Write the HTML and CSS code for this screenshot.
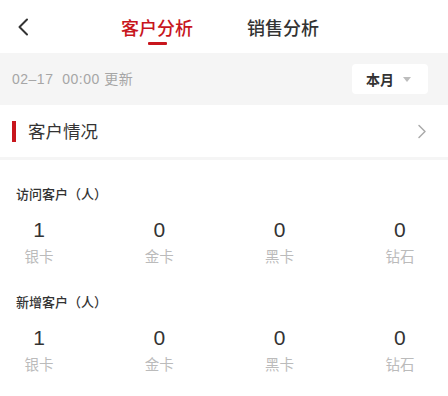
FILE: index.html
```html
<!DOCTYPE html>
<html lang="zh-CN">
<head>
<meta charset="utf-8">
<link rel="stylesheet" href="styles.css">
</head>
<body>
<div class="header">
  <svg class="back" width="12" height="18" viewBox="0 0 12 18"><path d="M10 1.5 L2.5 9 L10 16.5" fill="none" stroke="#333" stroke-width="2" stroke-linecap="round" stroke-linejoin="round"/></svg>
  <div class="tabs">
    <div class="tab active"><span>客户分析</span><i class="line"></i></div>
    <div class="tab"><span>销售分析</span></div>
  </div>
</div>
<div class="bar">
  <div class="date">02–17&nbsp;&nbsp;00:00 更新</div>
  <div class="picker"><span>本月</span><i class="tri"></i></div>
</div>
<div class="card-row">
  <i class="mark"></i>
  <div class="card-title">客户情况</div>
  <svg class="more" width="10" height="15" viewBox="0 0 10 15"><path d="M2 1.5 L8 7.5 L2 13.5" fill="none" stroke="#aaa" stroke-width="1.5" stroke-linecap="round" stroke-linejoin="round"/></svg>
</div>
<div class="divider"></div>
<div class="stats">
  <div class="group">
    <div class="g-title">访问客户（人）</div>
    <div class="cols">
      <div class="col"><div class="num">1</div><div class="lbl">银卡</div></div>
      <div class="col"><div class="num">0</div><div class="lbl">金卡</div></div>
      <div class="col"><div class="num">0</div><div class="lbl">黑卡</div></div>
      <div class="col"><div class="num">0</div><div class="lbl">钻石</div></div>
    </div>
  </div>
  <div class="group">
    <div class="g-title">新增客户（人）</div>
    <div class="cols">
      <div class="col"><div class="num">1</div><div class="lbl">银卡</div></div>
      <div class="col"><div class="num">0</div><div class="lbl">金卡</div></div>
      <div class="col"><div class="num">0</div><div class="lbl">黑卡</div></div>
      <div class="col"><div class="num">0</div><div class="lbl">钻石</div></div>
    </div>
  </div>
</div>
</body>
</html>
```
FILE: styles.css
```css
* { box-sizing: border-box; }
html, body { margin: 0; padding: 0; background: #fff; }
body {
  font-family: "Noto Sans CJK SC", "Noto Sans", sans-serif;
  color: #333;
  width: 448px;
}
.header {
  height: 53px;
  display: flex;
  align-items: flex-start;
  padding-left: 17px;
}
.back { margin-top: 18px; flex: none; }
.tabs {
  display: flex;
  gap: 54px;
  margin-left: 92px;
  padding-top: 15px;
}
.tab {
  display: flex;
  flex-direction: column;
  align-items: center;
  font-size: 18px;
  line-height: 24px;
  font-weight: 500;
  color: #333;
}
.tab.active { color: #c8161d; }
.line {
  display: block;
  width: 19px;
  height: 3px;
  margin-top: 3px;
  background: #c8161d;
  border-radius: 1px;
}
.bar {
  height: 52px;
  background: #f5f5f5;
  display: flex;
  align-items: center;
  justify-content: space-between;
  padding: 0 20px 0 12px;
}
.date {
  font-family: "Liberation Sans", "Noto Sans CJK SC", sans-serif;
  font-size: 14px;
  letter-spacing: 0.5px;
  color: #a6a6a6;
  line-height: 20px;
}
.picker {
  width: 76px;
  height: 30px;
  background: #fff;
  border-radius: 4px;
  display: flex;
  align-items: center;
  padding-left: 14px;
  gap: 9px;
}
.picker span {
  font-size: 14px;
  font-weight: 700;
  color: #333;
  line-height: 20px;
}
.tri {
  width: 0;
  height: 0;
  border-left: 4.5px solid transparent;
  border-right: 4.5px solid transparent;
  border-top: 5px solid #bdbdbd;
}
.card-row {
  height: 52px;
  display: flex;
  align-items: center;
  padding: 0 21px 0 12px;
}
.mark {
  width: 4px;
  height: 21px;
  background: #c8161d;
  margin-right: 12px;
  flex: none;
}
.card-title {
  font-size: 17.5px;
  line-height: 24px;
  color: #333;
  flex: 1;
}
.more { flex: none; }
.divider {
  height: 3px;
  background: #f5f5f5;
}
.stats { padding-top: 24px; }
.group { margin-bottom: 26px; }
.g-title {
  padding-left: 16px;
  font-size: 13px;
  line-height: 20px;
  font-weight: 500;
  color: #333;
}
.cols {
  display: grid;
  grid-template-columns: repeat(4, 50px);
  column-gap: 70.3px;
  padding-left: 14px;
  margin-top: 13px;
}
.col {
  display: flex;
  flex-direction: column;
  align-items: center;
}
.num {
  font-family: "Liberation Sans", "Noto Sans CJK SC", sans-serif;
  font-size: 21px;
  line-height: 26px;
  color: #333;
}
.lbl {
  margin-top: 3px;
  font-size: 14.5px;
  line-height: 20px;
  color: #bbb;
}
```
